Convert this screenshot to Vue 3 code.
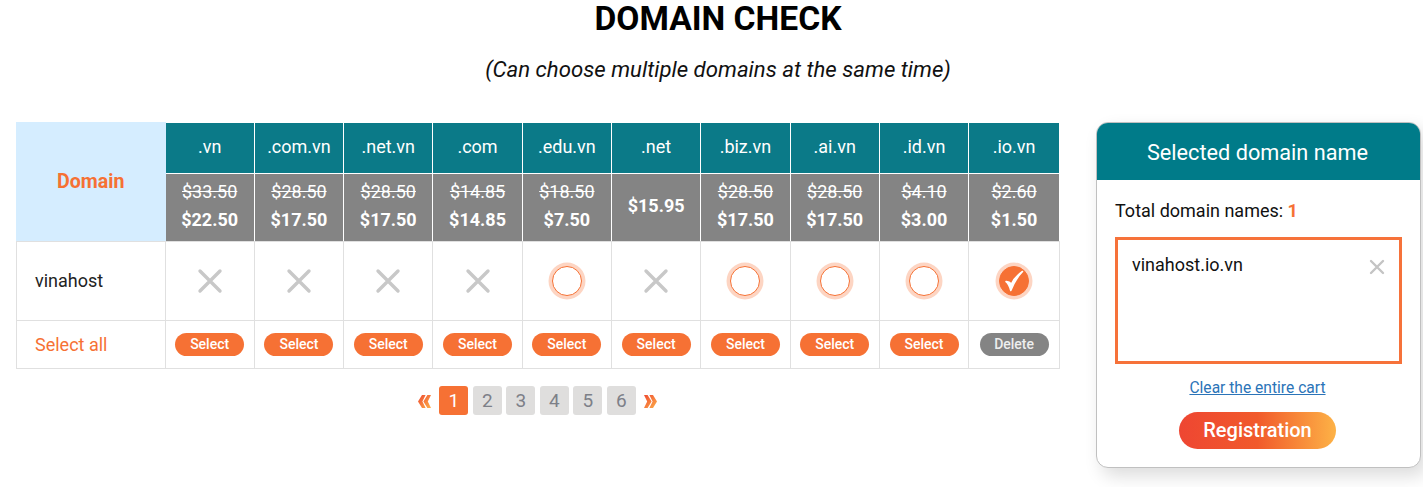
<template>
  <div class="page">
    <h1 class="title">DOMAIN CHECK</h1>
    <p class="subtitle">(Can choose multiple domains at the same time)</p>

    <div class="content">
      <div class="left">
        <table class="check-table">
          <colgroup>
            <col class="col-first" />
            <col v-for="(d, i) in domains" :key="d.ext" :class="{ 'col-ext': i < domains.length - 1 }" />
          </colgroup>
          <tbody>
            <tr class="row-ext">
              <th rowspan="2" class="th-domain">Domain</th>
              <th v-for="d in domains" :key="d.ext" class="th-ext">{{ d.ext }}</th>
            </tr>
            <tr class="row-price">
              <td v-for="d in domains" :key="d.ext" class="td-price">
                <div v-if="d.old" class="old">{{ d.old }}</div>
                <div class="now">{{ d.price }}</div>
              </td>
            </tr>
            <tr class="row-name">
              <td class="td-name">vinahost</td>
              <td v-for="d in domains" :key="d.ext" class="td-state">
                <svg v-if="d.state === 'taken'" class="cross" viewBox="0 0 26 26" width="26" height="26">
                  <path d="M3 3 L23 23 M23 3 L3 23" stroke="#c8c8c8" stroke-width="3.4" stroke-linecap="round" fill="none" />
                </svg>
                <span v-else class="radio" :class="{ checked: d.state === 'checked' }">
                  <svg v-if="d.state === 'checked'" viewBox="0 0 30 30" width="30" height="30">
                    <path d="M7 15.5 C9 17 10.5 19.5 11.8 24.5 C14.5 17.5 18 11 23.5 5.5 C18 9.5 14.5 13.5 12.4 18 C11 16.3 9.3 15.3 7 15.5 Z" fill="#fff" stroke="#fff" stroke-width="1.6" stroke-linejoin="round" />
                  </svg>
                </span>
              </td>
            </tr>
            <tr class="row-action">
              <td class="td-all">Select all</td>
              <td v-for="d in domains" :key="d.ext" class="td-action">
                <button class="pill" :class="{ del: d.state === 'checked' }">
                  {{ d.state === 'checked' ? 'Delete' : 'Select' }}
                </button>
              </td>
            </tr>
          </tbody>
        </table>

        <div class="pager">
          <svg class="arrow" viewBox="0 0 13 13" width="13" height="13">
            <defs>
              <linearGradient id="arrow-fill" x1="0" y1="0" x2="1" y2="1">
                <stop offset="0" stop-color="#ef4a30" />
                <stop offset="1" stop-color="#fdb04a" />
              </linearGradient>
            </defs>
            <path d="M4 0 L7.6 0 L4.4 6.5 L7.6 13 L4 13 L0 6.5 Z M9.4 0 L13 0 L9.8 6.5 L13 13 L9.4 13 L5.4 6.5 Z" fill="url(#arrow-fill)" />
          </svg>
          <span v-for="n in 6" :key="n" class="page-no" :class="{ active: n === 1 }">{{ n }}</span>
          <svg class="arrow" viewBox="0 0 13 13" width="13" height="13">
            <path d="M0 0 L3.6 0 L7.6 6.5 L3.6 13 L0 13 L3.2 6.5 Z M5.4 0 L9 0 L13 6.5 L9 13 L5.4 13 L8.6 6.5 Z" fill="url(#arrow-fill)" />
          </svg>
        </div>
      </div>

      <aside class="cart">
        <div class="cart-head">Selected domain name</div>
        <div class="cart-body">
          <div class="total">Total domain names: <b class="count">1</b></div>
          <div class="cart-box">
            <span>vinahost.io.vn</span>
            <svg class="remove" viewBox="0 0 16 16" width="16" height="16">
              <path d="M2 2 L14 14 M14 2 L2 14" stroke="#c4c4c4" stroke-width="2.4" stroke-linecap="round" fill="none" />
            </svg>
          </div>
          <a class="clear" href="#" @click.prevent>Clear the entire cart</a>
          <button class="register">Registration</button>
        </div>
      </aside>
    </div>
  </div>
</template>

<script setup>
const domains = [
  { ext: '.vn', old: '$33.50', price: '$22.50', state: 'taken' },
  { ext: '.com.vn', old: '$28.50', price: '$17.50', state: 'taken' },
  { ext: '.net.vn', old: '$28.50', price: '$17.50', state: 'taken' },
  { ext: '.com', old: '$14.85', price: '$14.85', state: 'taken' },
  { ext: '.edu.vn', old: '$18.50', price: '$7.50', state: 'free' },
  { ext: '.net', old: '', price: '$15.95', state: 'taken' },
  { ext: '.biz.vn', old: '$28.50', price: '$17.50', state: 'free' },
  { ext: '.ai.vn', old: '$28.50', price: '$17.50', state: 'free' },
  { ext: '.id.vn', old: '$4.10', price: '$3.00', state: 'free' },
  { ext: '.io.vn', old: '$2.60', price: '$1.50', state: 'checked' }
]
</script>

<style>
html, body {
  margin: 0;
  background: #fff;
}
</style>

<style scoped>
.page {
  height: 487px;
  overflow: hidden;
  font-family: Roboto, "Liberation Sans", sans-serif;
  color: #111;
}

.title {
  margin: 0;
  padding-left: 13px;
  height: 37px;
  line-height: 37px;
  text-align: center;
  font-size: 33.6px;
  font-weight: 700;
  color: #000;
}

.subtitle {
  margin: 0;
  padding: 18px 0 0 13px;
  height: 30px;
  line-height: 29px;
  text-align: center;
  font-size: 22.2px;
  font-style: italic;
  color: #111;
}

.content {
  display: flex;
  align-items: flex-start;
  padding: 37px 0 0 16px;
}

.left {
  width: 1044px;
}

.check-table {
  width: 1044px;
  table-layout: fixed;
  border-collapse: collapse;
  font-size: 16px;
}

.col-first {
  width: 148.5px;
}

.col-ext {
  width: 89.3px;
}

.check-table th,
.check-table td {
  padding: 0;
  text-align: center;
  vertical-align: middle;
  border: 1px solid #e0e0e0;
}

.row-ext { height: 51px; }
.row-price { height: 68px; }
.row-name { height: 79px; }
.row-action { height: 48px; }

.check-table .th-domain {
  padding-bottom: 1px;
  background: #d5edff;
  color: #f67134;
  font-size: 19.6px;
  font-weight: 700;
  border-color: #d5edff;
  border-bottom-color: #e0e0e0;
}

.check-table .th-ext {
  padding-bottom: 2px;
  background: #0b7a88;
  color: #fff;
  font-size: 18px;
  font-weight: 400;
  border: 1px solid #fff;
  border-top: none;
}

.check-table .td-price {
  padding-bottom: 3px;
  background: #848484;
  color: #fff;
  border: 1px solid #fff;
  border-bottom: 1px solid #e0e0e0;
  font-size: 18px;
  line-height: 28px;
}

.old {
  text-decoration: line-through;
  font-weight: 400;
}

.now {
  font-weight: 700;
}

.check-table .td-name,
.check-table .td-all {
  text-align: left;
  padding-left: 18px;
  padding-bottom: 1px;
  font-size: 18px;
}

.td-name { color: #222; }
.td-all { color: #f67134; }

.td-state {
  line-height: 0;
}

.cross {
  display: inline-block;
}

.radio {
  display: inline-block;
  box-sizing: content-box;
  width: 28px;
  height: 28px;
  background: #fff;
  border: 1px solid #f67134;
  border-radius: 50%;
  box-shadow: 0 0 0 3.5px #fdd5c3;
}

.radio.checked {
  background: #f67134;
}

.radio svg {
  display: block;
  margin: -1px;
}

.pill {
  display: inline-block;
  width: 69px;
  height: 23px;
  padding: 0;
  border: none;
  border-radius: 12px;
  background: #f67134;
  color: #fff;
  font-family: inherit;
  font-size: 14px;
  font-weight: 500;
  line-height: 23px;
}

.pill.del {
  background: #848484;
  color: #eee;
}

.pager {
  display: flex;
  justify-content: center;
  align-items: center;
  gap: 4.5px;
  margin-top: 17px;
  padding-right: 1px;
}

.page-no {
  width: 29px;
  height: 29px;
  border-radius: 3px;
  background: #dfdedd;
  color: #7d8088;
  font-size: 19px;
  line-height: 29px;
  text-align: center;
}

.page-no.active {
  background: #f67134;
  color: #fff;
}

.arrow {
  margin: 2px 4px 0;
}

.cart {
  box-sizing: border-box;
  width: 325px;
  height: 346px;
  margin-left: 36px;
  border: 1px solid #c0c0c0;
  border-radius: 12px;
  background: #fff;
  box-shadow: 6px 8px 18px rgba(0, 0, 0, 0.14);
  overflow: hidden;
}

.cart-head {
  padding-right: 2px;
  height: 57px;
  line-height: 59px;
  background: #007b89;
  color: #fff;
  text-align: center;
  font-size: 21.7px;
}

.cart-body {
  display: flex;
  flex-direction: column;
  padding: 0 18px;
}

.total {
  margin-top: 21px;
  height: 19px;
  line-height: 19px;
  font-size: 18px;
  color: #111;
}

.count {
  color: #f67134;
  font-weight: 700;
}

.cart-box {
  box-sizing: border-box;
  display: flex;
  justify-content: space-between;
  align-items: flex-start;
  height: 127px;
  margin-top: 17px;
  padding: 15px 14px 0 14px;
  border: 3px solid #f6723a;
  font-size: 18px;
  line-height: 20px;
  color: #111;
}

.remove {
  margin-top: 4px;
}

.clear {
  align-self: center;
  margin-top: 14px;
  margin-right: 2px;
  font-size: 15.6px;
  line-height: 20px;
  color: #2b74b8;
  text-decoration: underline;
}

.register {
  align-self: center;
  width: 157px;
  height: 37px;
  margin-top: 14px;
  margin-right: 2px;
  padding-bottom: 3px;
  border: none;
  border-radius: 19px;
  background: linear-gradient(90deg, #ee4632 0%, #f15a2b 50%, #fdb246 100%);
  color: #fff;
  font-family: inherit;
  font-size: 20px;
  font-weight: 500;
}
</style>
